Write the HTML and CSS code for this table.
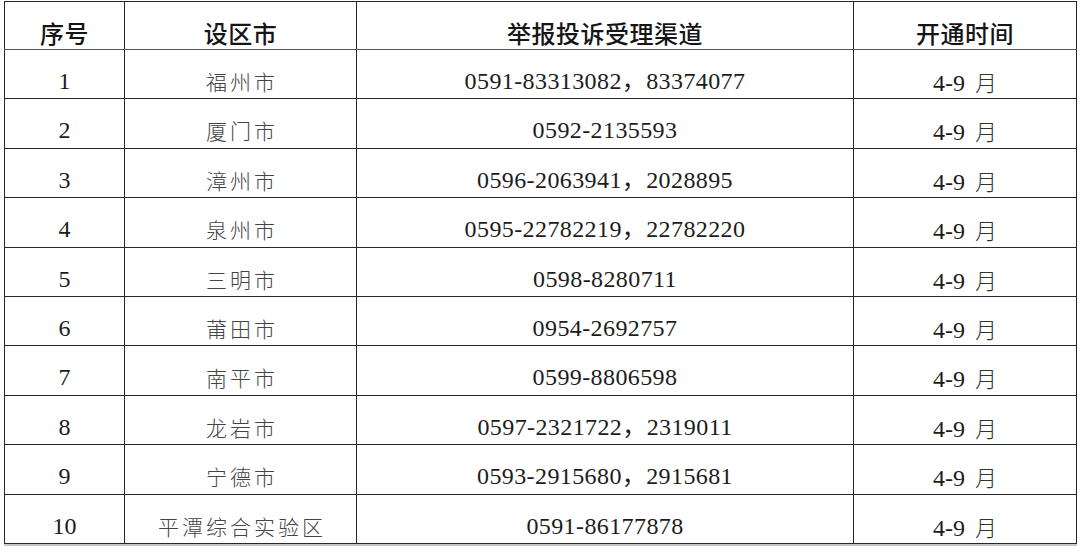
FILE: index.html
```html
<!DOCTYPE html>
<html lang="zh-CN">
<head>
<meta charset="utf-8">
<title>举报投诉受理渠道</title>
<link rel="stylesheet" href="styles.css">
</head>
<body>
<div class="sheet">
<table class="grid">
  <colgroup>
    <col class="c-no"><col class="c-city"><col class="c-tel"><col class="c-time">
  </colgroup>
  <thead>
    <tr><th>序号</th><th>设区市</th><th>举报投诉受理渠道</th><th>开通时间</th></tr>
  </thead>
  <tbody>
    <tr><td>1</td><td class="city">福州市</td><td class="tel">0591-83313082，83374077</td><td class="time">4-9 <span class="mo">月</span></td></tr>
    <tr><td>2</td><td class="city">厦门市</td><td class="tel">0592-2135593</td><td class="time">4-9 <span class="mo">月</span></td></tr>
    <tr><td>3</td><td class="city">漳州市</td><td class="tel">0596-2063941，2028895</td><td class="time">4-9 <span class="mo">月</span></td></tr>
    <tr><td>4</td><td class="city">泉州市</td><td class="tel">0595-22782219，22782220</td><td class="time">4-9 <span class="mo">月</span></td></tr>
    <tr><td>5</td><td class="city">三明市</td><td class="tel">0598-8280711</td><td class="time">4-9 <span class="mo">月</span></td></tr>
    <tr><td>6</td><td class="city">莆田市</td><td class="tel">0954-2692757</td><td class="time">4-9 <span class="mo">月</span></td></tr>
    <tr><td>7</td><td class="city">南平市</td><td class="tel">0599-8806598</td><td class="time">4-9 <span class="mo">月</span></td></tr>
    <tr><td>8</td><td class="city">龙岩市</td><td class="tel">0597-2321722，2319011</td><td class="time">4-9 <span class="mo">月</span></td></tr>
    <tr><td>9</td><td class="city">宁德市</td><td class="tel">0593-2915680，2915681</td><td class="time">4-9 <span class="mo">月</span></td></tr>
    <tr><td>10</td><td class="city">平潭综合实验区</td><td class="tel">0591-86177878</td><td class="time">4-9 <span class="mo">月</span></td></tr>
  </tbody>
</table>
</div>
</body>
</html>
```

FILE: styles.css
```css
html, body {
  margin: 0;
  padding: 0;
  background: #ffffff;
}

.sheet {
  padding: 1px 0 0 4px;
  width: 1080px;
  height: 550px;
  box-sizing: border-box;
}

.grid {
  border-collapse: collapse;
  table-layout: fixed;
  width: 1073px;
  border-bottom: 1px solid #222;
  box-shadow: 0 2px 0 #c8c8c8;
}

.c-no { width: 120px; }
.c-city { width: 232px; }
.c-tel { width: 497px; }
.c-time { width: 223px; }

.grid th,
.grid td {
  border: 1px solid #262626;
  text-align: center;
  vertical-align: top;
  padding: 0;
  white-space: nowrap;
}

.grid th {
  height: 48px;
  box-sizing: border-box;
  padding-top: 19px;
  font-family: "Noto Sans CJK SC", "Noto Sans", sans-serif;
  font-weight: 500;
  font-size: 24px;
  letter-spacing: 0.5px;
  line-height: 24px;
  color: #151515;
}

.grid thead th {
  border-bottom: 1px solid #555;
}

.grid td {
  height: 49.4px;
  box-sizing: border-box;
  padding-top: 19px;
  font-family: "Liberation Serif", "Noto Sans CJK SC", serif;
  font-size: 24px;
  line-height: 24px;
  color: #1c1c1c;
}

.grid td.tel {
  letter-spacing: 0.4px;
}

.grid td.time {
  word-spacing: 4px;
}

.grid td .mo {
  font-family: "Noto Sans CJK SC", sans-serif;
  font-weight: 300;
  font-size: 22px;
  color: #333;
}

.grid td.city {
  font-family: "Noto Sans CJK SC", sans-serif;
  font-size: 21px;
  letter-spacing: 3px;
  text-indent: 3px;
  color: #444;
  font-weight: 300;
}
```
